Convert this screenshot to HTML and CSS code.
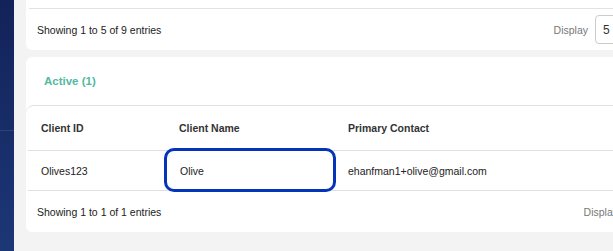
FILE: index.html
```html
<!DOCTYPE html>
<html lang="en">

<head>
    <meta charset="UTF-8">
    <meta name="viewport" content="width=device-width, initial-scale=1.0">
    <title>Clients</title>
    <link rel="stylesheet" href="styles.css">
</head>

<body>
    <aside class="sidebar">
        <div class="sidebar-line"></div>
    </aside>
    <main>
        <div class="card card-top">
            <div class="row-end"></div>
            <div class="card-footer">
                <span>Showing 1 to 5 of 9 entries</span>
                <div class="display">
                    <span>Display</span>
                    <div class="select">5</div>
                </div>
            </div>
        </div>

        <div class="card card-active">
            <div class="card-title">Active (1)</div>
            <div class="table-box">
                <div class="tr th">
                    <div class="td col-id">Client ID</div>
                    <div class="td col-name">Client Name</div>
                    <div class="td col-contact">Primary Contact</div>
                </div>
                <div class="tr">
                    <div class="td col-id">Olives123</div>
                    <div class="td col-name">Olive<span class="highlight"></span></div>
                    <div class="td col-contact">ehanfman1+olive@gmail.com</div>
                </div>
            </div>
            <div class="card-footer">
                <span>Showing 1 to 1 of 1 entries</span>
                <div class="display">
                    <span>Display</span>
                    <div class="select">5</div>
                </div>
            </div>
        </div>
    </main>
</body>

</html>
```

FILE: styles.css
```css
* {
    box-sizing: border-box;
}

body {
    margin: 0;
    height: 251px;
    display: flex;
    overflow: hidden;
    font-family: "Liberation Sans", Arial, sans-serif;
    font-size: 10.5px;
    color: #222;
}

.sidebar {
    width: 14px;
    flex-shrink: 0;
    background: linear-gradient(180deg, #13225a 0%, #172d68 50%, #1c3776 100%);
    padding-top: 130px;
}

.sidebar-line {
    height: 1px;
    background: rgba(255, 255, 255, 0.1);
}

main {
    flex: 1;
    background: #f3f3f3;
    padding-left: 12px;
    overflow: hidden;
}

.card {
    background: #fff;
    border-radius: 6px;
}

.card-top {
    width: 631px;
    border-radius: 0 0 6px 6px;
}

.card-active {
    width: 661px;
    margin-top: 7px;
}

.row-end {
    height: 9px;
    margin-left: 3px;
    border-bottom: 1px solid #e2e2e2;
}

.card-footer {
    height: 41px;
    display: flex;
    align-items: center;
    justify-content: space-between;
    padding: 0 12px 0 11px;
}

.display {
    display: flex;
    align-items: center;
    gap: 7px;
    color: #777;
}

.select {
    width: 50px;
    height: 29px;
    border: 1px solid #ccc;
    border-radius: 4px;
    padding-left: 7px;
    display: flex;
    align-items: center;
    color: #333;
    font-size: 12px;
}

.card-title {
    height: 48px;
    display: flex;
    align-items: center;
    padding-left: 18px;
    color: #52b9a2;
    font-size: 11.5px;
    font-weight: bold;
}

.table-box {
    border-top: 1px solid #e0e0e0;
    border-radius: 8px 0 0 0;
}

.tr {
    display: flex;
    height: 40px;
    margin-left: 2px;
    border-bottom: 1px solid #e0e0e0;
}

.th {
    height: 45px;
    font-weight: bold;
    color: #333;
}

.td {
    display: flex;
    align-items: center;
    padding-left: 13px;
}

.col-id {
    width: 138px;
}

.col-name {
    width: 169px;
    position: relative;
}

.col-name:not(:first-child) {
    padding-left: 14px;
}

.th .col-name {
    padding-left: 13px;
}

.col-contact {
    flex: 1;
}

.highlight {
    position: absolute;
    left: -2px;
    right: -1px;
    top: -3px;
    bottom: -2px;
    border: 3px solid #0334b9;
    border-radius: 10px;
}
```
